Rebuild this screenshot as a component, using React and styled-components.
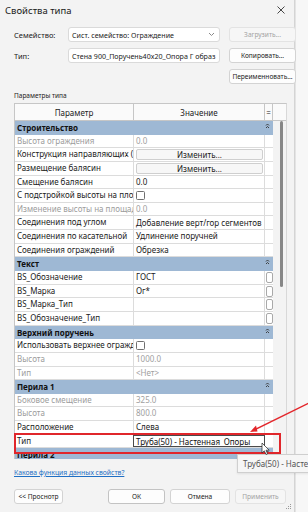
import React from "react";
import styled, { createGlobalStyle } from "styled-components";

const GlobalStyle = createGlobalStyle`
  html, body { margin: 0; padding: 0; }
  body {
    background: #f4f4f4;
    font-family: "Noto Sans", "Open Sans", sans-serif;
    color: #1b1b1b;
  }
`;

const sections = [
  {
    title: "Строительство",
    rows: [
      { name: "Высота ограждения", value: "0.0", muted: true, mutedName: true },
      { name: "Конструкция направляющих (непрерывные)", button: "Изменить..." },
      { name: "Размещение балясин", button: "Изменить..." },
      { name: "Смещение балясин", value: "0.0" },
      { name: "С подстройкой высоты на площадке", check: true },
      { name: "Изменение высоты на площадке", value: "0.0", muted: true, mutedName: true },
      { name: "Соединения под углом", value: "Добавление верт/гор сегментов" },
      { name: "Соединения по касательной", value: "Удлинение поручней" },
      { name: "Соединения ограждений", value: "Обрезка" },
    ],
  },
  {
    title: "Текст",
    rows: [
      { name: "BS_Обозначение", value: "ГОСТ", assoc: true },
      { name: "BS_Марка", value: "Ог*", assoc: true },
      { name: "BS_Марка_Тип", value: "", assoc: true },
      { name: "BS_Обозначение_Тип", value: "", assoc: true },
    ],
  },
  {
    title: "Верхний поручень",
    rows: [
      { name: "Использовать верхнее ограждение", check: true },
      { name: "Высота", value: "1000.0", muted: true, mutedName: true },
      { name: "Тип", value: "<Нет>", muted: true, mutedName: true },
    ],
  },
  {
    title: "Перила 1",
    rows: [
      { name: "Боковое смещение", value: "325.0", muted: true, mutedName: true },
      { name: "Высота", value: "800.0", muted: true, mutedName: true },
      { name: "Расположение", value: "Слева" },
      { name: "Тип", value: "Труба(50) - Настенная_Опоры", editing: true },
    ],
  },
  { title: "Перила 2", rows: [] },
];

const Chevron = () => (
  <svg width="7" height="5" viewBox="0 0 7 5">
    <path d="M1 1l2.5 2.5L6 1" fill="none" stroke="#8a8a8a" strokeWidth="1" />
  </svg>
);

const Collapse = () => (
  <svg width="5" height="6" viewBox="0 0 5 6">
    <path d="M1 2.5l1.5-1.5 1.5 1.5M1 5l1.5-1.5 1.5 1.5" fill="none" stroke="#333" strokeWidth="0.9" />
  </svg>
);

const renderValue = (r) => {
  if (r.button) {
    return (
      <ValueCell>
        <CellButton>{r.button}</CellButton>
      </ValueCell>
    );
  }
  if (r.check) {
    return (
      <ValueCell>
        <Check />
      </ValueCell>
    );
  }
  if (r.editing) return <EditCell>{r.value}</EditCell>;
  return <ValueCell $muted={r.muted}>{r.value}</ValueCell>;
};

const App = () => {
  return (
    <>
      <GlobalStyle />
      <Screen>
        <Dialog>
          <TitleBar>
            <Title>Свойства типа</Title>
            <svg width="8" height="8" viewBox="0 0 8 8">
              <path d="M0.5 0.5l7 7M7.5 0.5l-7 7" stroke="#333" strokeWidth="0.9" />
            </svg>
          </TitleBar>

          <Form>
            <FieldRow>
              <Label>Семейство:</Label>
              <Combo>
                <span>Сист. семейство: Ограждение</span>
                <Chevron />
              </Combo>
              <Button disabled>Загрузить...</Button>
            </FieldRow>
            <FieldRow>
              <Label>Тип:</Label>
              <Combo>
                <span>Стена 900_Поручень40x20_Опора Г образ</span>
                <Chevron />
              </Combo>
              <Button>Копировать...</Button>
            </FieldRow>
            <FieldRow>
              <span />
              <span />
              <Button>Переименновать...</Button>
            </FieldRow>
          </Form>

          <GroupLabel>Параметры типа</GroupLabel>

          <Table>
            <HeaderRow>
              <HeadCell>Параметр</HeadCell>
              <HeadCell>Значение</HeadCell>
              <HeadCell>=</HeadCell>
              <span />
            </HeaderRow>
            <Body>
              <Rows>
                {sections.map((s) => (
                  <React.Fragment key={s.title}>
                    <Section>
                      <span>{s.title}</span>
                      <Collapse />
                    </Section>
                    {s.rows.map((r, i) => (
                      <Row key={s.title + i}>
                        <NameCell $muted={r.mutedName}>{r.name}</NameCell>
                        {renderValue(r)}
                        <AssocCell>{r.assoc && <AssocBox />}</AssocCell>
                      </Row>
                    ))}
                  </React.Fragment>
                ))}
              </Rows>
              <ScrollTrack>
                <Thumb />
              </ScrollTrack>
            </Body>
          </Table>

          <HelpLink>Какова функция данных свойств?</HelpLink>

          <Footer>
            <Button $w={49}>&lt;&lt; Проснотр</Button>
            <FooterGroup>
              <Button $w={57} $primary>ОК</Button>
              <Button $w={60}>Отмена</Button>
              <Button $w={51} disabled>Применить</Button>
            </FooterGroup>
          </Footer>

          <Grip width="7" height="7" viewBox="0 0 7 7">
            <g fill="#9a9a9a">
              <rect x="5" y="1" width="1" height="1" />
              <rect x="3" y="3" width="1" height="1" />
              <rect x="5" y="3" width="1" height="1" />
              <rect x="1" y="5" width="1" height="1" />
              <rect x="3" y="5" width="1" height="1" />
              <rect x="5" y="5" width="1" height="1" />
            </g>
          </Grip>
        </Dialog>
        <Backdrop />

        <Highlight />
        <Tooltip>Труба(50) - Настенная_Опоры</Tooltip>
        <Overlay width="308" height="512" viewBox="0 0 308 512">
          <path d="M309 403 L254 430" stroke="#e3262b" strokeWidth="1.4" fill="none" />
          <path d="M250 432 L256 425.5 L257.5 431.5 Z" fill="#e3262b" />
          <path
            d="M262 443 L262 453 L264.3 450.8 L266 454.5 L267.6 453.8 L266 450.2 L269.2 450.2 Z"
            fill="#fff"
            stroke="#222"
            strokeWidth="0.7"
          />
        </Overlay>
      </Screen>
    </>
  );
};

export default App;

const Screen = styled.div`
  position: relative;
  display: flex;
  width: 308px;
  height: 512px;
  overflow: hidden;
`;

const Dialog = styled.div`
  position: relative;
  width: 295px;
  height: 512px;
  flex: none;
  background: #f3f3f3;
  border-right: 1px solid #d4d4d4;
  box-sizing: border-box;
  display: flex;
  flex-direction: column;
`;

const Backdrop = styled.div`
  flex: 1;
  background: #f7f7f7;
  border-left: 1px solid #e4e4e4;
`;

const TitleBar = styled.div`
  height: 20px;
  padding: 0 9px 0 5px;
  display: flex;
  align-items: center;
  justify-content: space-between;
`;

const Title = styled.div`
  font-size: 9.5px;
  color: #1a1a1a;
`;

const Form = styled.div`
  margin-top: 7px;
  padding-left: 14px;
  display: flex;
  flex-direction: column;
  gap: 6px;
`;

const FieldRow = styled.div`
  display: grid;
  grid-template-columns: 45px 152px 67px;
  column-gap: 9px;
  height: 15px;
  align-items: center;
`;

const Label = styled.div`
  font-size: 7.5px;
  color: #1a1a1a;
`;

const Combo = styled.div`
  height: 15px;
  box-sizing: border-box;
  background: #fff;
  border: 1px solid #dadada;
  border-radius: 3px;
  display: flex;
  align-items: center;
  justify-content: space-between;
  padding: 0 4px 0 3px;
  font-size: 7.1px;
  white-space: nowrap;
  overflow: hidden;
`;

const Button = styled.div`
  height: 15px;
  width: ${(p) => (p.$w ? `${p.$w}px` : "auto")};
  box-sizing: border-box;
  display: flex;
  align-items: center;
  justify-content: center;
  font-size: 6.6px;
  white-space: nowrap;
  border-radius: 3px;
  background: ${(p) => (p.disabled ? "#f6f6f6" : "#fdfdfd")};
  border: 1px solid ${(p) => (p.disabled ? "#e3e3e3" : p.$primary ? "#c3c3c3" : "#d3d3d3")};
  color: ${(p) => (p.disabled ? "#a2a2a2" : "#1a1a1a")};
`;

const GroupLabel = styled.div`
  margin-top: 7px;
  padding-left: 14px;
  height: 10px;
  line-height: 10px;
  font-size: 6.5px;
  color: #1a1a1a;
`;

const Table = styled.div`
  margin: 2px 0 0 14px;
  width: 273px;
  height: 356px;
  box-sizing: border-box;
  border-top: 1px solid #c6c6c6;
  border-left: 1px solid #c6c6c6;
  border-right: 1px solid #d8d8d8;
  display: flex;
  flex-direction: column;
  overflow: hidden;
`;

const HeaderRow = styled.div`
  display: grid;
  grid-template-columns: 119px 131px 8px 1fr;
  height: 16px;
  flex: none;
  background: #fafafa;
  border-bottom: 1px solid #c6c6c6;
`;

const HeadCell = styled.div`
  display: flex;
  align-items: center;
  justify-content: center;
  font-size: 8px;
  color: #222;
  border-right: 1px solid #c6c6c6;
`;

const Body = styled.div`
  display: flex;
  flex: 1;
  min-height: 0;
`;

const Rows = styled.div`
  width: 258px;
  flex: none;
  background: #fff;
  overflow: hidden;
`;

const Section = styled.div`
  height: 13.65px;
  box-sizing: border-box;
  background: #9eb8d4;
  display: flex;
  align-items: flex-start;
  justify-content: space-between;
  padding: 0 3px 0 2px;
  font-size: 8px;
  font-weight: 700;
  line-height: 13px;
  color: #111;
  svg { margin-top: 2px; }
`;

const Row = styled.div`
  display: grid;
  grid-template-columns: 119px 131px 8px;
  height: 13.65px;
  box-sizing: border-box;
  border-bottom: 1px solid #dcdcdc;
`;

const NameCell = styled.div`
  font-size: 8px;
  line-height: 12.6px;
  padding-left: 2px;
  white-space: nowrap;
  overflow: hidden;
  border-right: 1px solid #dcdcdc;
  color: ${(p) => (p.$muted ? "#9c9c9c" : "#1b1b1b")};
`;

const ValueCell = styled.div`
  font-size: 8px;
  line-height: 12.6px;
  padding-left: 2px;
  white-space: nowrap;
  overflow: hidden;
  display: flex;
  align-items: center;
  border-right: 1px solid #dcdcdc;
  color: ${(p) => (p.$muted ? "#a0a0a0" : "#1b1b1b")};
`;

const EditCell = styled.div`
  font-size: 8px;
  line-height: 11px;
  padding-left: 2px;
  margin: 0 0 0 -1px;
  height: 12.6px;
  box-sizing: border-box;
  border: 1px solid #4a4a4a;
  background: #fff;
  white-space: nowrap;
  overflow: hidden;
  color: #111;
`;

const CellButton = styled.div`
  flex: 1;
  height: 11px;
  margin-right: 1px;
  box-sizing: border-box;
  border: 1px solid #cfcfcf;
  border-radius: 2px;
  background: #f7f7f7;
  font-size: 8px;
  line-height: 9px;
  text-align: center;
  color: #1b1b1b;
`;

const Check = styled.div`
  width: 7px;
  height: 7px;
  border: 1px solid #6f6f6f;
  border-radius: 1.5px;
  background: #fff;
`;

const AssocCell = styled.div`
  display: flex;
  align-items: center;
`;

const AssocBox = styled.div`
  width: 7px;
  height: 11px;
  margin-left: 0.5px;
  box-sizing: border-box;
  border: 1px solid #a9a9a9;
  border-radius: 2px;
  background: #fff;
`;

const ScrollTrack = styled.div`
  flex: 1;
  background: #f3f3f3;
`;

const Thumb = styled.div`
  margin: 0 0 0 7px;
  width: 2.5px;
  height: 166px;
  border-radius: 2px;
  background: #878787;
`;

const HelpLink = styled.div`
  margin: 9px 0 0 14px;
  height: 9px;
  line-height: 9px;
  font-size: 6.8px;
  color: #1f6fc4;
  text-decoration: underline;
`;

const Footer = styled.div`
  margin-top: 12px;
  padding: 0 8px 0 14px;
  display: flex;
  align-items: center;
`;

const FooterGroup = styled.div`
  margin-left: auto;
  display: flex;
  gap: 5px;
`;

const Grip = styled.svg`
  position: absolute;
  right: 2px;
  bottom: 2px;
`;

const Highlight = styled.div`
  position: absolute;
  left: 14px;
  top: 433px;
  width: 267px;
  height: 21px;
  box-sizing: border-box;
  border: 2px solid #e0262b;
  pointer-events: none;
`;

const Tooltip = styled.div`
  position: absolute;
  left: 237px;
  top: 454px;
  width: 110px;
  height: 19px;
  box-sizing: border-box;
  padding-left: 5px;
  background: #f6f6f6;
  border: 1px solid #cfcfcf;
  font-size: 8px;
  line-height: 17px;
  color: #555;
  white-space: nowrap;
  box-shadow: 0 1px 2px rgba(0, 0, 0, 0.08);
`;

const Overlay = styled.svg`
  position: absolute;
  left: 0;
  top: 0;
  pointer-events: none;
`;
